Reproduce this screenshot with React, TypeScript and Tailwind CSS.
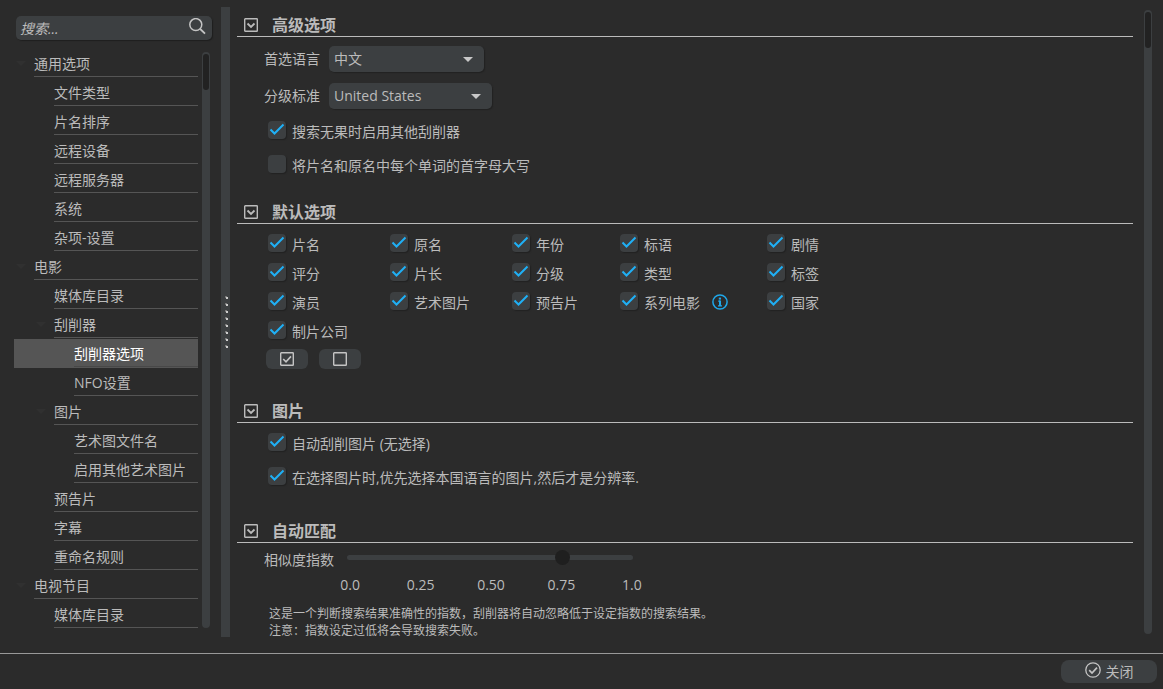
import React, { useState } from "react";

type TreeItem = { label: string; level: 0 | 1 | 2; open?: boolean };

const treeItems: TreeItem[] = [
  { label: "通用选项", level: 0, open: true },
  { label: "文件类型", level: 1 },
  { label: "片名排序", level: 1 },
  { label: "远程设备", level: 1 },
  { label: "远程服务器", level: 1 },
  { label: "系统", level: 1 },
  { label: "杂项-设置", level: 1 },
  { label: "电影", level: 0, open: true },
  { label: "媒体库目录", level: 1 },
  { label: "刮削器", level: 1, open: true },
  { label: "刮削器选项", level: 2 },
  { label: "NFO设置", level: 2 },
  { label: "图片", level: 1, open: true },
  { label: "艺术图文件名", level: 2 },
  { label: "启用其他艺术图片", level: 2 },
  { label: "预告片", level: 1 },
  { label: "字幕", level: 1 },
  { label: "重命名规则", level: 1 },
  { label: "电视节目", level: 0, open: true },
  { label: "媒体库目录", level: 1 },
];

const indent = { 0: "pl-5", 1: "pl-10", 2: "pl-[60px]" };
const arrowIndent = { 0: "left-0.5", 1: "left-[22px]", 2: "left-[42px]" };

const defaultFields = [
  "片名", "原名", "年份", "标语", "剧情",
  "评分", "片长", "分级", "类型", "标签",
  "演员", "艺术图片", "预告片", "系列电影", "国家",
  "制片公司",
];

const Check = ({ label, checked = false }: { label: string; checked?: boolean }) => (
  <label className="flex h-5 items-start gap-1.5 whitespace-nowrap">
    <span className="grid size-[18px] shrink-0 rounded bg-[#3c3f41] shadow-[1px_1px_1px_#222]">
      <input
        type="checkbox"
        defaultChecked={checked}
        className="peer col-start-1 row-start-1 size-[18px] appearance-none rounded"
      />
      <svg
        viewBox="0 0 18 18"
        className="pointer-events-none invisible col-start-1 row-start-1 size-[18px] fill-none stroke-[#1fb0f6] stroke-2 peer-checked:visible"
      >
        <path d="M2.5 8.5 6.5 12.5 15.5 3.5" />
      </svg>
    </span>
    <span className="pt-px leading-5">{label}</span>
  </label>
);

const Select = ({ id, label, options, width }: { id: string; label: string; options: string[]; width: string }) => (
  <div className="flex items-center">
    <label htmlFor={id} className="w-[65px] leading-5">{label}</label>
    <div className="relative">
      <select
        id={id}
        className={`block h-[26px] appearance-none rounded-[5px] bg-[#3c3f41] pl-[5px] leading-5 shadow-[1px_1px_1px_#222] ${width}`}
      >
        {options.map((option) => (
          <option key={option}>{option}</option>
        ))}
      </select>
      <svg viewBox="0 0 10 5" className="pointer-events-none absolute top-[11px] right-[11px] h-[5px] w-2.5 fill-[#c8c8c8]">
        <path d="M0 0h10L5 5z" />
      </svg>
    </div>
  </div>
);

const Section = ({ title, children }: { title: string; children: React.ReactNode }) => (
  <section>
    <h2 className="flex h-6 items-center border-b border-[#bbb] pl-[7px] text-base font-bold">
      <button type="button" aria-label={title} className="mr-3.5">
        <svg viewBox="0 0 14 14" className="size-3.5 fill-none stroke-[#bbb]">
          <rect x="0.7" y="0.7" width="12.6" height="12.6" rx="0.6" strokeWidth="1.4" />
          <path d="M3.5 5.5 7 9 10.5 5.5" strokeWidth="1.8" />
        </svg>
      </button>
      {title}
    </h2>
    {children}
  </section>
);

const Sidebar = () => {
  const [selected, setSelected] = useState(10);

  return (
    <aside className="flex w-[221px] shrink-0 flex-col pt-4 pl-3.5">
      <div className="relative mr-[9px] ml-0.5">
        <input
          type="search"
          aria-label="搜索"
          placeholder="搜索..."
          className="block h-6 w-full rounded-[5px] bg-[#3c3f41] pr-7 pl-1 italic shadow-[1px_1px_1px_#1f1f1f] outline-none placeholder:text-[#bbb]"
        />
        <svg viewBox="0 0 17 17" className="pointer-events-none absolute top-0.5 right-1.5 size-[17px] fill-none stroke-[#c4c4c4]">
          <circle cx="6.8" cy="6.6" r="6" strokeWidth="1.5" />
          <path d="M11.2 11 16 15.6" strokeWidth="1.8" />
        </svg>
      </div>
      <div className="mt-[9px] flex min-h-0 flex-1 overflow-hidden pb-2">
        <ul className="w-[184px]">
          {treeItems.map((item, i) => (
            <li key={i} className={`relative h-[29px] pb-px ${indent[item.level]} ${i === selected ? "bg-[#555] text-white" : ""}`}>
              {item.open && (
                <svg viewBox="0 0 10 5" className={`absolute top-3 h-[5px] w-2.5 fill-[#303030] ${arrowIndent[item.level]}`}>
                  <path d="M0 0h10L5 5z" />
                </svg>
              )}
              <button
                type="button"
                onClick={() => setSelected(i)}
                className={`block h-7 w-full border-b text-left leading-[30px] ${i === selected ? "border-[#484848]" : "border-[#555]"}`}
              >
                {item.label}
              </button>
            </li>
          ))}
        </ul>
        <div className="mt-[3px] mb-[17px] ml-1 w-2 rounded-full bg-[#3c3f41] px-px pt-0.5">
          <div className="h-9 rounded-full bg-[#222]" />
        </div>
      </div>
    </aside>
  );
};

const Splitter = () => (
  <div className="mt-[7px] mb-4 flex w-[9px] shrink-0 flex-col items-center justify-center gap-1 bg-[#3c3f41] pl-px">
    {Array.from({ length: 8 }, (_, i) => (
      <svg key={i} viewBox="0 0 3 3" className="size-[3px]">
        <rect width="2" height="2" fill="#777" />
        <rect x="1" y="1" width="2" height="2" fill="#ccc" />
      </svg>
    ))}
  </div>
);

const App = () => {
  return (
    <div className="flex h-screen flex-col bg-[#2b2b2b] font-['Open_Sans','Noto_Sans_CJK_SC',sans-serif] text-sm text-[#bbb]">
      <div className="flex min-h-0 flex-1">
        <Sidebar />
        <Splitter />

        <main className="min-w-0 flex-1 overflow-hidden pt-[13px] pr-[11px] pl-[7px]">
          <Section title="高级选项">
            <div className="flex flex-col gap-[11px] pt-[9px] pl-[27px]">
              <Select id="language" label="首选语言" options={["中文", "English"]} width="w-[155px]" />
              <Select id="certification" label="分级标准" options={["United States", "China"]} width="w-[163px]" />
            </div>
            <div className="flex flex-col gap-3.5 pt-3 pb-[25px] pl-[31px]">
              <Check label="搜索无果时启用其他刮削器" checked />
              <Check label="将片名和原名中每个单词的首字母大写" />
            </div>
          </Section>

          <Section title="默认选项">
            <div className="grid grid-cols-[122px_122px_108px_147px_auto] gap-y-[9px] pt-2.5 pl-[31px]">
              {defaultFields.map((field) => (
                <div key={field} className="flex gap-3">
                  <Check label={field} checked />
                  {field === "系列电影" && (
                    <svg viewBox="0 0 16 16" className="mt-0.5 size-4 fill-none stroke-[#1fa8ea]">
                      <circle cx="8" cy="8" r="7.1" strokeWidth="1.5" />
                      <path d="M7.9 3.6v2" strokeWidth="2.2" />
                      <path d="M6.2 7.2H8M6 11.9h4" strokeWidth="1.3" />
                      <path d="M8 6.6v5.4" strokeWidth="2" />
                    </svg>
                  )}
                </div>
              ))}
            </div>
            <div className="flex gap-[11px] pt-2 pb-[30px] pl-[29px]">
              <button type="button" aria-label="全选" className="flex h-5 w-[42px] items-center justify-center rounded-md bg-[#3c3f41]">
                <svg viewBox="0 0 14 14" className="size-3.5 fill-none stroke-[#c4c4c4]">
                  <rect x="0.7" y="0.7" width="12.6" height="12.6" rx="0.6" strokeWidth="1.4" />
                  <path d="M3.2 7 6 9.8 11 4.4" strokeWidth="1.6" />
                </svg>
              </button>
              <button type="button" aria-label="全不选" className="flex h-5 w-[42px] items-center justify-center rounded-md bg-[#3c3f41]">
                <svg viewBox="0 0 14 14" className="size-3.5 fill-none stroke-[#c4c4c4]">
                  <rect x="0.7" y="0.7" width="12.6" height="12.6" rx="0.6" strokeWidth="1.4" />
                </svg>
              </button>
            </div>
          </Section>

          <Section title="图片">
            <div className="flex flex-col gap-3.5 pt-2.5 pb-8 pl-[31px]">
              <Check label="自动刮削图片 (无选择)" checked />
              <Check label="在选择图片时,优先选择本国语言的图片,然后才是分辨率." checked />
            </div>
          </Section>

          <Section title="自动匹配">
            <div className="flex items-start pt-[7px] pl-[27px]">
              <label htmlFor="similarity" className="w-[83px] leading-5">相似度指数</label>
              <input
                id="similarity"
                type="range"
                min={0}
                max={1}
                step={0.05}
                defaultValue={0.75}
                className="mt-[5px] h-[5px] w-[286px] appearance-none rounded-full bg-[#3c3f41] [&::-webkit-slider-runnable-track]:-mr-2 [&::-webkit-slider-runnable-track]:-ml-1 [&::-webkit-slider-thumb]:size-[15px] [&::-webkit-slider-thumb]:appearance-none [&::-webkit-slider-thumb]:rounded-full [&::-webkit-slider-thumb]:bg-[#1f1f1f]"
              />
            </div>
            <div className="mt-[5px] ml-[78px] grid w-[352px] grid-cols-5 text-center leading-5">
              <span>0.0</span>
              <span>0.25</span>
              <span>0.50</span>
              <span>0.75</span>
              <span>1.0</span>
            </div>
            <p className="pt-2.5 pl-8 text-xs leading-[17px]">
              这是一个判断搜索结果准确性的指数，刮削器将自动忽略低于设定指数的搜索结果。
              <br />
              注意：指数设定过低将会导致搜索失败。
            </p>
          </Section>
        </main>

        <div className="mt-2.5 mr-[11px] mb-[19px] w-2 shrink-0 rounded-full bg-[#3c3f41] px-px pt-0.5">
          <div className="h-9 rounded-full bg-[#222]" />
        </div>
      </div>

      <footer className="flex h-9 shrink-0 items-start justify-end border-t border-[#999] pt-1.5 pr-1.5">
        <button type="button" className="flex h-[23px] w-24 items-center justify-center gap-[5px] rounded-lg bg-[#3c3f41]">
          <svg viewBox="0 0 16 16" className="mb-1 size-4 fill-none stroke-[#c4c4c4]">
            <circle cx="8" cy="8" r="7.2" strokeWidth="1.3" />
            <path d="M4.2 8.2 7 11 12 5.6" strokeWidth="1.7" />
          </svg>
          关闭
        </button>
      </footer>
    </div>
  );
};

export default App;
